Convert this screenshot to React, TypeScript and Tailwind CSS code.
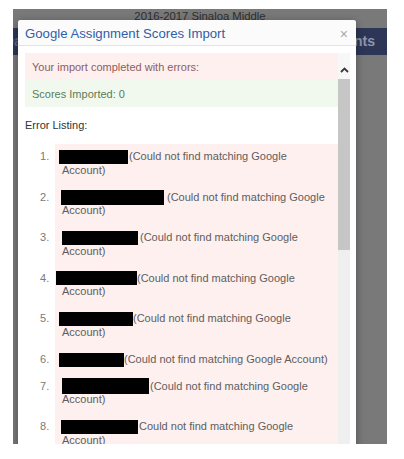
const errors = [
  { n: 1, w: 69, ml: -3, mr: 1, h: 14, dy: 0, paren: true, wrap: true },
  { n: 2, w: 103, ml: -1, mr: 3, h: 15, dy: -1, paren: true, wrap: true },
  { n: 3, w: 76, ml: 0, mr: 2, h: 14, dy: 0, paren: true, wrap: true },
  { n: 4, w: 81, ml: -6, mr: 0, h: 14, dy: -1, paren: true, wrap: true },
  { n: 5, w: 74, ml: -3, mr: 0, h: 14, dy: 0, paren: true, wrap: true },
  { n: 6, w: 65, ml: -3, mr: 0, h: 14, dy: 0, paren: true, wrap: false },
  { n: 7, w: 87, ml: 0, mr: 1, h: 16, dy: -2, paren: true, wrap: true },
  { n: 8, w: 77, ml: -1, mr: 1, h: 14, dy: 0, paren: false, wrap: true },
];

export default function App() {
  return (
    <div className="w-[404px] h-[459px] bg-white pt-[9px] pl-[13px] font-['Liberation_Sans',Arial,sans-serif]">
      {/* page behind the dialog, dimmed */}
      <div className="relative w-[374px] h-[435px] bg-[#797979] overflow-hidden">
        <p className="h-[19px] pt-[1px] text-center text-[11.3px] leading-[13px] text-[#2e2e2e]">
          2016-2017 Sinaloa Middle
        </p>
        <div className="h-[27px] bg-[#2d3656] flex items-center justify-between pr-[12px] text-[14px] font-bold text-[#8e96ab]">
          <span className="-ml-[9px] text-[#5d6684]">Dashboard</span>
          <span>Assignments</span>
        </div>

        {/* modal */}
        <div className="absolute left-[5px] top-[11px] w-[338px] h-[460px] bg-white rounded-t-[3px] shadow-[0_2px_8px_rgba(0,0,0,0.35)] flex flex-col overflow-hidden">
          <div className="h-[26px] shrink-0 flex items-center justify-between pl-[7px] pr-[8px] pt-[2px] bg-[#fbfbfb] border-b border-[#e3e3e3]">
            <h2 className="text-[13.2px] text-[#2f5ea8]">Google Assignment Scores Import</h2>
            <span className="text-[14px] leading-none text-[#a8a8a8]">×</span>
          </div>

          <div className="flex-1 pt-[7px] pl-[7px] pr-[6px] flex">
            <div className="flex-1 text-[11px] leading-[13.5px]">
              <div className="h-[27px] flex items-center pl-[7px] pt-[2px] bg-[#fdf0ef] text-[#8f5d5d]">
                Your import completed with errors:
              </div>
              <div className="h-[27px] flex items-center pl-[7px] pt-[3px] bg-[#f1f9ef] text-[#5c7b56]">
                Scores Imported: 0
              </div>
              <p className="mt-[12px] text-[#333]">Error Listing:</p>

              <ol className="mt-[11px]">
                {errors.map((e) => (
                  <li key={e.n} className="flex">
                    <span className="w-[30px] shrink-0 pl-[15px] py-[6.75px] text-[#7a7a7a]">{e.n}.</span>
                    <div className="flex-1 bg-[#fdf0ef] pl-[7px] py-[6.75px] text-[#5e5e5e]">
                      <span
                        className="relative inline-block align-top bg-black"
                        style={{
                          width: e.w,
                          height: e.h,
                          marginLeft: e.ml,
                          marginRight: e.mr,
                          marginBottom: 13 - e.h,
                          top: e.dy,
                        }}
                      />
                      {e.paren ? "(" : ""}Could not find matching Google{e.wrap ? <br /> : " "}Account)
                    </div>
                  </li>
                ))}
              </ol>
            </div>

            {/* scrollbar */}
            <div className="w-[12px] shrink-0 bg-[#efefef] flex flex-col">
              <div className="h-[26px] bg-[#f7f7f7] flex items-end justify-center pb-[6px]">
                <svg width="9" height="6" viewBox="0 0 9 6">
                  <path d="M1 5 L4.5 1.5 L8 5" fill="none" stroke="#3a3a3a" strokeWidth="1.8" />
                </svg>
              </div>
              <div className="h-[171px] bg-[#c6c6c6]" />
            </div>
          </div>
        </div>
      </div>
    </div>
  );
}
